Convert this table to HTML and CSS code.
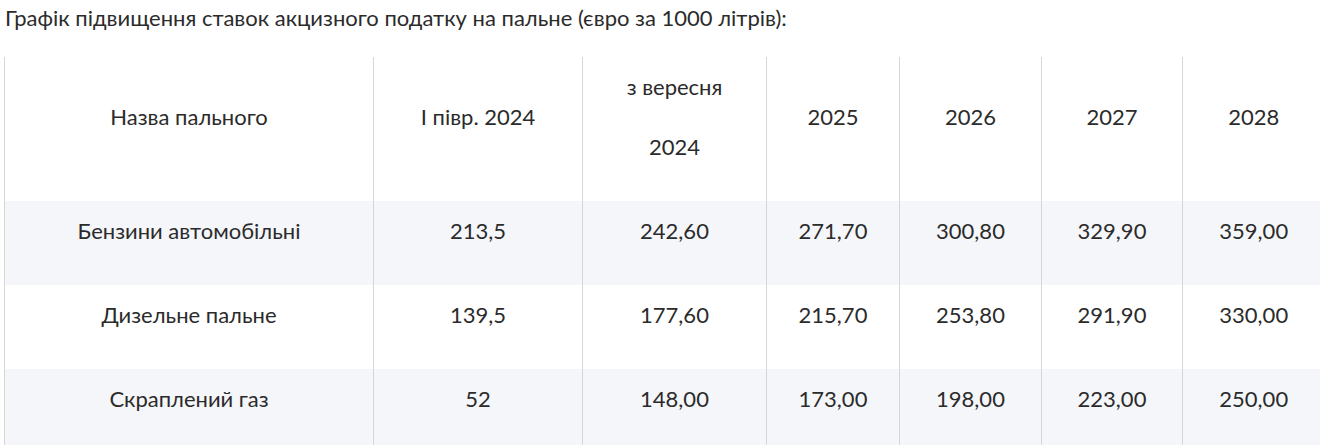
FILE: index.html
```html
<!DOCTYPE html>
<html lang="uk">
<head>
<meta charset="utf-8">
<link rel="stylesheet" href="styles.css">
</head>
<body>
<div class="page">
  <p class="title">Графік підвищення ставок акцизного податку на пальне (євро за 1000 літрів):</p>
  <table class="rates">
    <colgroup>
      <col class="c1"><col class="c2"><col class="c3"><col class="c4"><col class="c5"><col class="c6"><col class="c7">
    </colgroup>
    <thead>
      <tr>
        <td><p>Назва пального</p></td>
        <td><p>I півр. 2024</p></td>
        <td><p>з вересня</p><p>2024</p></td>
        <td><p>2025</p></td>
        <td><p>2026</p></td>
        <td><p>2027</p></td>
        <td><p>2028</p></td>
      </tr>
    </thead>
    <tbody>
      <tr class="alt">
        <td><p>Бензини автомобільні</p></td>
        <td><p>213,5</p></td>
        <td><p>242,60</p></td>
        <td><p>271,70</p></td>
        <td><p>300,80</p></td>
        <td><p>329,90</p></td>
        <td><p>359,00</p></td>
      </tr>
      <tr>
        <td><p>Дизельне пальне</p></td>
        <td><p>139,5</p></td>
        <td><p>177,60</p></td>
        <td><p>215,70</p></td>
        <td><p>253,80</p></td>
        <td><p>291,90</p></td>
        <td><p>330,00</p></td>
      </tr>
      <tr class="alt">
        <td><p>Скраплений газ</p></td>
        <td><p>52</p></td>
        <td><p>148,00</p></td>
        <td><p>173,00</p></td>
        <td><p>198,00</p></td>
        <td><p>223,00</p></td>
        <td><p>250,00</p></td>
      </tr>
    </tbody>
  </table>
</div>
</body>
</html>
```
FILE: styles.css
```css
html, body {
  margin: 0;
  padding: 0;
  background: #ffffff;
}
body {
  font-family: Lato, "Noto Sans", sans-serif;
  color: #2b2b2b;
  font-size: 22px;
  overflow: hidden;
}
.page {
  padding-left: 4px;
  width: 1320px;
}
.title {
  margin: 0;
  padding: 3px 0 0 1px;
  line-height: 30px;
  height: 57px;
  box-sizing: border-box;
}
.rates {
  border-collapse: collapse;
  table-layout: fixed;
  width: 1320px;
}
.c1 { width: 369px; }
.c2 { width: 209px; }
.c3 { width: 184px; }
.c4 { width: 133px; }
.c5 { width: 142px; }
.c6 { width: 141px; }
.c7 { width: 142px; }
.rates td {
  border-left: 1px solid #d6d6d8;
  padding: 12px 6px;
  text-align: center;
  vertical-align: middle;
}
.rates td p {
  margin: 0 0 24px;
  line-height: 36px;
}
.rates tr.alt td {
  background: #f5f6fa;
}
```
